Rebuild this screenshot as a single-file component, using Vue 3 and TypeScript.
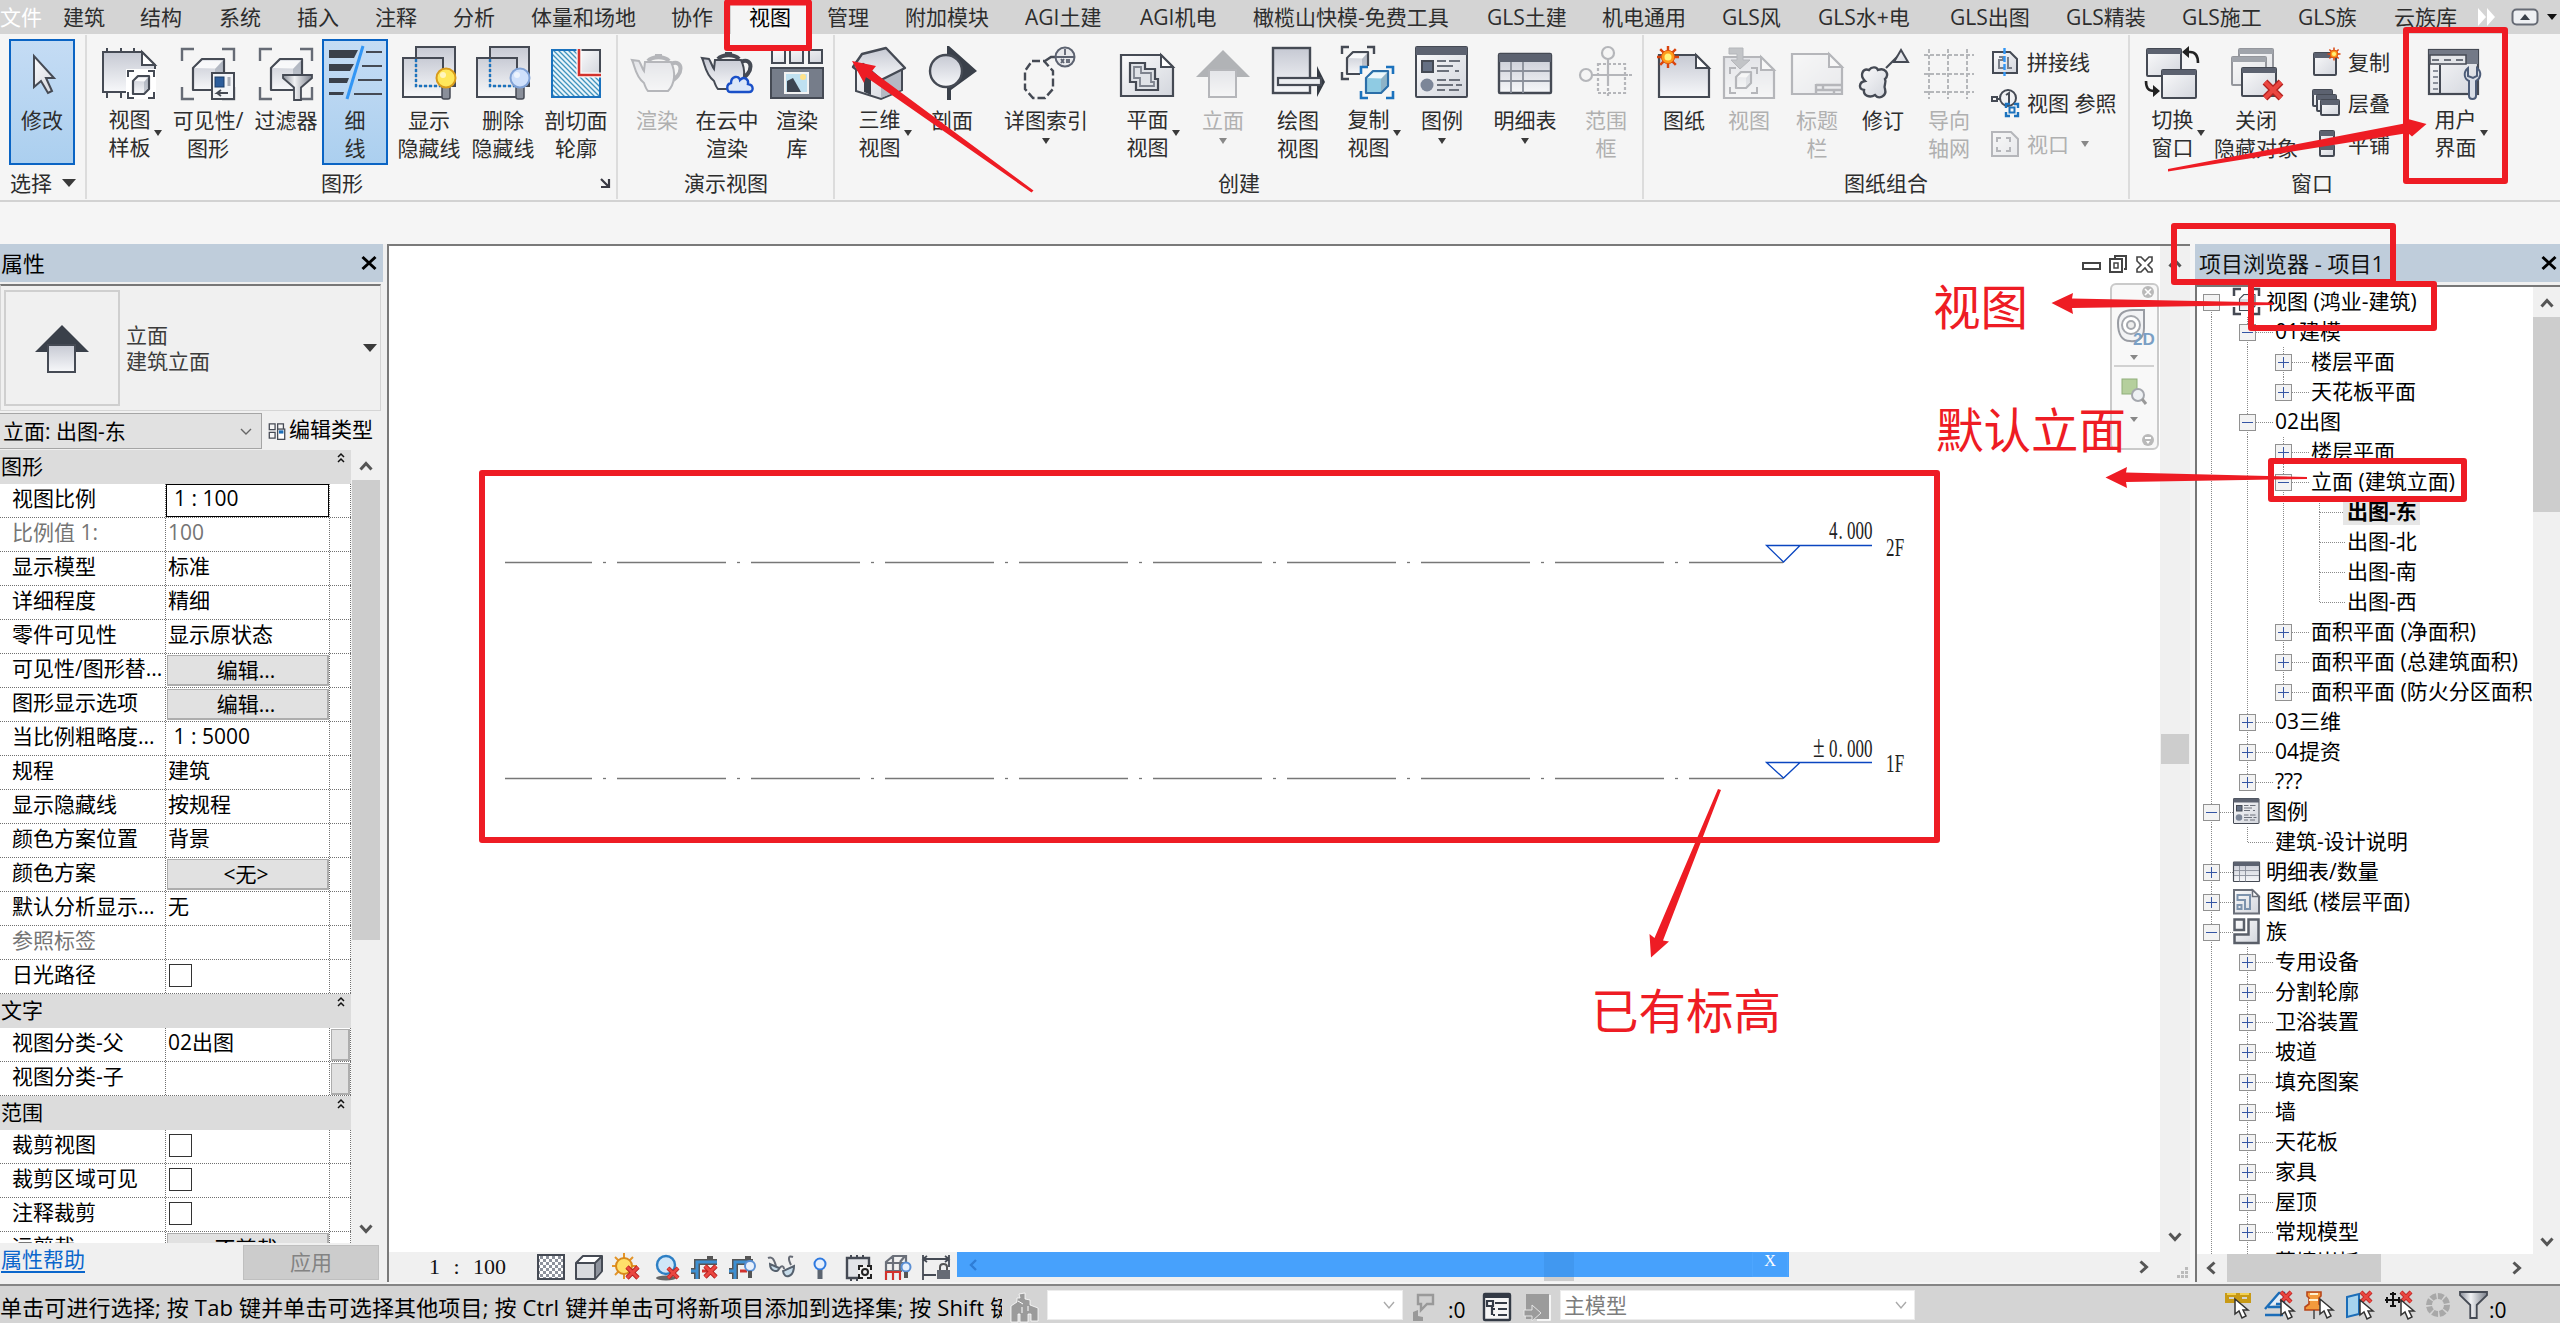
<script setup lang="ts">
type Arrow = 'side' | 'below' | ''
interface Tool { icon: string; lines: string[]; c: number; arrow?: Arrow; on?: boolean; off?: boolean }
interface SmallTool { icon: string; text: string; off?: boolean; arrow?: boolean }
interface Group { from: number; to: number; label: string; labelAt: number; tools: Tool[]; small?: SmallTool[]; smallAt?: number; tail?: Tool[]; launcher?: boolean; menu?: boolean }

const TOOL_W = 66

const tabs: [string, number][] = [
  ['文件', 0], ['建筑', 63], ['结构', 140], ['系统', 219], ['插入', 297], ['注释', 375], ['分析', 453],
  ['体量和场地', 531], ['协作', 671], ['视图', 749], ['管理', 827], ['附加模块', 905], ['AGI土建', 1025],
  ['AGI机电', 1140], ['橄榄山快模-免费工具', 1253], ['GLS土建', 1487], ['机电通用', 1602], ['GLS风', 1722],
  ['GLS水+电', 1818], ['GLS出图', 1950], ['GLS精装', 2066], ['GLS施工', 2182], ['GLS族', 2298], ['云族库', 2394],
]
const tabWidth = (i: number) => (i + 1 < tabs.length ? tabs[i + 1][1] : 2478) - tabs[i][1]

const groups: Group[] = [
  { from: 0, to: 87, label: '选择', labelAt: 31, menu: true, tools: [{ icon: 'cursor', lines: ['修改'], c: 42, on: true }] },
  {
    from: 87, to: 618, label: '图形', labelAt: 342, launcher: true,
    tools: [
      { icon: 'template', lines: ['视图', '样板'], c: 129, arrow: 'side' },
      { icon: 'visibility', lines: ['可见性/', '图形'], c: 208 },
      { icon: 'filter', lines: ['过滤器'], c: 286 },
      { icon: 'thin', lines: ['细', '线'], c: 355, on: true },
      { icon: 'showHidden', lines: ['显示', '隐藏线'], c: 429 },
      { icon: 'removeHidden', lines: ['删除', '隐藏线'], c: 503 },
      { icon: 'cutProfile', lines: ['剖切面', '轮廓'], c: 576 },
    ],
  },
  {
    from: 618, to: 835, label: '演示视图', labelAt: 726,
    tools: [
      { icon: 'teapot', lines: ['渲染'], c: 657, off: true },
      { icon: 'teapotCloud', lines: ['在云中', '渲染'], c: 727 },
      { icon: 'gallery', lines: ['渲染', '库'], c: 797 },
    ],
  },
  {
    from: 835, to: 1644, label: '创建', labelAt: 1239,
    tools: [
      { icon: 'house3d', lines: ['三维', '视图'], c: 879, arrow: 'side' },
      { icon: 'section', lines: ['剖面'], c: 952 },
      { icon: 'callout', lines: ['详图索引'], c: 1046, arrow: 'below' },
      { icon: 'plan', lines: ['平面', '视图'], c: 1147, arrow: 'side' },
      { icon: 'elevation', lines: ['立面'], c: 1223, arrow: 'below', off: true },
      { icon: 'drafting', lines: ['绘图', '视图'], c: 1298 },
      { icon: 'duplicate', lines: ['复制', '视图'], c: 1368, arrow: 'side' },
      { icon: 'legend', lines: ['图例'], c: 1442, arrow: 'below' },
      { icon: 'schedule', lines: ['明细表'], c: 1525, arrow: 'below' },
      { icon: 'scopeBox', lines: ['范围', '框'], c: 1606, off: true },
    ],
  },
  {
    from: 1644, to: 2130, label: '图纸组合', labelAt: 1886,
    tools: [
      { icon: 'sheet', lines: ['图纸'], c: 1684 },
      { icon: 'placeView', lines: ['视图'], c: 1749, off: true },
      { icon: 'titleBlock', lines: ['标题', '栏'], c: 1817, off: true },
      { icon: 'revision', lines: ['修订'], c: 1883 },
      { icon: 'guideGrid', lines: ['导向', '轴网'], c: 1949, off: true },
    ],
    smallAt: 1991,
    small: [
      { icon: 'matchLine', text: '拼接线' },
      { icon: 'viewRef', text: '视图 参照' },
      { icon: 'viewport', text: '视口', off: true, arrow: true },
    ],
  },
  {
    from: 2130, to: 2560, label: '窗口', labelAt: 2312,
    tools: [
      { icon: 'switchWin', lines: ['切换', '窗口'], c: 2172, arrow: 'side' },
      { icon: 'closeHidden', lines: ['关闭', '隐藏对象'], c: 2256 },
    ],
    smallAt: 2312,
    small: [
      { icon: 'newWin', text: '复制' },
      { icon: 'cascade', text: '层叠' },
      { icon: 'tile', text: '平铺' },
    ],
    tail: [{ icon: 'userUi', lines: ['用户', '界面'], c: 2455, arrow: 'side' }],
  },
]
const toolGap = (g: Group, i: number) => {
  const left = g.tools[i].c - TOOL_W / 2
  return i === 0 ? left - g.from : left - (g.tools[i - 1].c + TOOL_W / 2)
}
const smallGap = (g: Group) => (g.smallAt ?? 0) - (g.tools[g.tools.length - 1].c + TOOL_W / 2)

const D = '#454a54'
const cube = (x: number, y: number, w: number, h: number, d: number, c = D, f = 'url(#gl)') =>
  `<path d="M${x} ${y + d}l${d}-${d}h${w}v${h}l-${d} ${d}h-${w}z" fill="${f}" stroke="${c}" stroke-width="2.2" stroke-linejoin="round"/><path d="M${x + 1.5} ${y + d}l${d - 1}-${d - 1.5}h${w - 1}l-${d - 1} ${d - 1}z" fill="#fff" fill-opacity=".85"/><path d="M${x + w} ${y + d + 1}v${h - 2}l${d - 1}-${d}v-${h - 2}z" fill="#8f96a3" fill-opacity=".45"/>`
const corners = (x: number, y: number, w: number, h: number, k: number, c = D, s = 2) =>
  `<path d="M${x} ${y + k}v-${k}h${k}M${x + w - k} ${y}h${k}v${k}M${x + w} ${y + h - k}v${k}h-${k}M${x + k} ${y + h}h-${k}v-${k}" fill="none" stroke="${c}" stroke-width="${s}"/>`
const win = (x: number, y: number, w: number, h: number) =>
  `<rect x="${x}" y="${y}" width="${w}" height="${h}" rx="1" fill="url(#gf)" stroke="${D}" stroke-width="2"/><rect x="${x}" y="${y}" width="${w}" height="5" fill="#5c6270"/>`
const bulb = (x: number, y: number, f: string, s: string) =>
  `<rect x="${x - 4}" y="${y + 8}" width="8" height="13" rx="2" fill="#8a8f9a" stroke="#454a54" stroke-width="1.5"/><circle cx="${x}" cy="${y}" r="9.5" fill="${f}" stroke="${s}" stroke-width="2"/><circle cx="${x - 3}" cy="${y - 3}" r="3" fill="#fff" opacity=".6"/>`
const redX = (x: number, y: number, s: number) =>
  `<path d="M${x} ${y}l${s} ${s}M${x + s} ${y}l-${s} ${s}" stroke="#b3201f" stroke-width="${s * 0.42}"/><path d="M${x} ${y}l${s} ${s}M${x + s} ${y}l-${s} ${s}" stroke="#ea4640" stroke-width="${s * 0.26}"/>`
const pot = (x: number, y: number) =>
  `<g transform="translate(${x} ${y})"><path d="M40 12c12-6 14 12-2 18" fill="none" stroke="${D}" stroke-width="4"/><path d="M14 10h26c5 10 4 22-3 29h-20c-2-2-3-5-4-8C4 24 4 14 1 8l7 1c2 3 3 7 5 10z" fill="url(#gl)" stroke="${D}" stroke-width="2"/><path d="M17 9c4-5 17-5 21 0M24 4h7" fill="none" stroke="${D}" stroke-width="4"/></g>`
const arrowCursor = (x: number, y: number) =>
  `<path transform="translate(${x} ${y})" d="M0 0v15l4-3 3 7 4-2-3-6h5z" fill="#fff" stroke="#333" stroke-width="1.5"/>`
const star = (x: number, y: number, r: number) => {
  let p = ''
  for (let i = 0; i < 8; i++) {
    const a = (i * Math.PI) / 4
    p += `M${x} ${y}L${(x + r * Math.cos(a)).toFixed(1)} ${(y + r * Math.sin(a)).toFixed(1)}`
  }
  return `<path d="${p}" stroke="#d9430d" stroke-width="${r / 4.5}"/><circle cx="${x}" cy="${y}" r="${r * 0.6}" fill="#ff9a1c" stroke="#e0560f" stroke-width="1"/><circle cx="${x}" cy="${y}" r="${r * 0.32}" fill="#fff27a"/>`
}
const hiddenBoxes = `<rect x="14" y="1" width="39" height="39" fill="url(#gl)" stroke="${D}" stroke-width="2"/><rect x="1" y="12" width="40" height="39" fill="url(#gl)" fill-opacity=".85" stroke="${D}" stroke-width="2"/><path d="M14 13v27h27" fill="none" stroke="#1b72bd" stroke-width="2.4" stroke-dasharray="3 2"/>`
const legendIcon = `<rect x="1" y="1" width="51" height="50" rx="1" fill="url(#gf)" stroke="${D}" stroke-width="2"/><rect x="1" y="1" width="51" height="8" fill="#5c6270"/><rect x="7" y="15" width="11" height="11" fill="#657084" stroke="${D}" stroke-width="2"/><circle cx="12" cy="39" r="6.5" fill="#7c8698"/><path d="M22 15h9M34 15h11M22 20h16M22 25h12M40 25h4M22 34h9M34 34h11M22 39h16M41 39h6M22 44h8M34 44h10" stroke="#6c717b" stroke-width="2"/>`
const scheduleIcon = `<rect x="1" y="8" width="52" height="39" rx="1" fill="url(#gl)" stroke="${D}" stroke-width="2.4"/><rect x="1" y="8" width="52" height="8" fill="#5c6270"/><path d="M13 16v31M25 16v31M2 25h50M2 35h50" stroke="#8a8f9a" stroke-width="1.8"/>`
const sheetIcon = `<path d="M2 9h37l13 13v29h-50z" fill="url(#gl)" stroke="${D}" stroke-width="2.2"/><path d="M39 9v13h13z" fill="#fff" stroke="${D}" stroke-width="2"/>`
const revCloud = (x: number, y: number) =>
  `<path transform="translate(${x} ${y})" d="M6 14C0 8 4 1 10 3C13-1 18 0 19 3C26 0 31 7 26 12C28 16 24 19 26 22C28 29 20 33 16 28C11 31 4 29 5 23C-1 22 0 15 6 14z" fill="url(#gf)" stroke="${D}" stroke-width="2.4"/>`
const funnel = (x: number, y: number, w: number, h: number) =>
  `<path d="M${x} ${y}h${w}v${h * 0.12}l-${w * 0.38} ${h * 0.38}v${h * 0.5}h-${w * 0.24}v-${h * 0.5}l-${w * 0.38}-${h * 0.38}z" fill="url(#gm)" stroke="${D}" stroke-width="1.8"/>`

const icons: Record<string, string> = {
  cursor: `<path d="M19 10v31l7-6 7 12 4-2-6-13h8z" fill="url(#gf)" stroke="${D}" stroke-width="2"/>`,
  template: `<path d="M5 2v6M19 2v6M32 2v6M5 44v8M19 44v8" stroke="${D}" stroke-width="2"/><path d="M1 6h39l13 13v27h-52z" fill="url(#gl)" stroke="${D}" stroke-width="2"/><path d="M40 6v13h13z" fill="#fff" stroke="${D}" stroke-width="2"/><rect x="24" y="23" width="30" height="30" fill="#fff"/>${corners(26, 25, 26, 27, 6)}${cube(31, 30, 11, 13, 5)}`,
  visibility: `${corners(1, 3, 52, 50, 12, '#666b75', 2.4)}${cube(12, 13, 22, 22, 9)}<rect x="31" y="27" width="22" height="26" fill="#f2f4f7" stroke="${D}" stroke-width="2"/><rect x="34" y="31" width="9" height="10" fill="#2c5d9b" stroke="#1b3d69"/><path d="M48 31v9" stroke="#a9adb6" stroke-width="3"/><path d="M47 47h-11l4-3m-4 3l4 3" fill="none" stroke="${D}" stroke-width="1.8"/>`,
  filter: `${corners(1, 3, 52, 50, 12, '#666b75', 2.4)}${cube(12, 13, 22, 22, 9)}${funnel(24, 29, 29, 25)}`,
  thin: `<path d="M1 4h29l-4 8h-25zM1 18h25l-4 7h-21zM1 32h20l-2 5h-18zM1 46h15l-1 3h-14z" fill="#3a404a"/><path d="M38 6h16M34 20h20M30 34h24M26 48h28" stroke="${D}" stroke-width="2"/><path d="M35 0L19 53" stroke="#3296f5" stroke-width="3"/>`,
  showHidden: hiddenBoxes + bulb(44, 32, '#ffe75a', '#d89b1b'),
  removeHidden: hiddenBoxes + bulb(44, 32, '#cfe0fb', '#7fa1d6'),
  cutProfile: `<rect x="3" y="4" width="48" height="47" fill="url(#ht)" stroke="#1b72bd" stroke-width="2"/><path d="M30 4h21v24h-21z" fill="url(#gf)" stroke="${D}" stroke-width="2"/><path d="M30 3v26h22" fill="none" stroke="#fff" stroke-width="5"/><path d="M30 3v26h22" fill="none" stroke="#d2322d" stroke-width="2.6"/>`,
  teapot: pot(1, 6),
  teapotCloud: `${pot(1, 4)}<path d="M31 46c-5 0-5-8 0-9 0-7 8-8 9-3 4-4 9-1 8 4 6 1 6 8 1 8z" fill="#dce7f8" stroke="#1a50c8" stroke-width="2.4"/>`,
  gallery: `<path d="M2 4h13v13h-13zM20 4h13v13h-13zM39 4h13v13h-13z" fill="url(#gf)" stroke="${D}" stroke-width="2"/><rect x="1" y="22" width="52" height="30" fill="#767d8a" stroke="${D}" stroke-width="2"/><rect x="15" y="27" width="23" height="20" fill="#bfe0f0" stroke="#f2f2f2" stroke-width="2"/><path d="M17 46v-11l6-3 8 14z" fill="#3c4450"/><circle cx="33" cy="31" r="3" fill="#ffe28a"/>`,
  house3d: `<path d="M4 24v21l25 8 21-9v-21l-22-10z" fill="url(#gf)" stroke="${D}" stroke-width="2"/><path d="M29 33v19l20-8v-21z" fill="#b5bac4"/><path d="M1 21L10 8 34 2 53 22 29 34 11 18 5 24z" fill="url(#gl)" stroke="${D}" stroke-width="2.4" stroke-linejoin="round"/><path d="M12 30l7 3v16l-7-3z" fill="#3a404a"/>`,
  section: `<path d="M24 0L52 25 26 44v10h-4v-54z" fill="#3a404a"/><circle cx="21" cy="25" r="16" fill="url(#gl)" stroke="${D}" stroke-width="2.4"/>`,
  callout: `<path d="M13 15h12l9 10v18l-8 9h-12l-8-9v-18z" fill="none" stroke="${D}" stroke-width="2.4" stroke-dasharray="8 3"/><path d="M26 15l6-4h6" fill="none" stroke="${D}" stroke-width="2.4"/><circle cx="46" cy="11" r="9.500" fill="#e8e9ec" stroke="#5c6270" stroke-width="2"/><path d="M36 11h20M46 3v6M42 13l3 4M45 13l-3 4M48 13v4M50 13v4" stroke="#5c6270" stroke-width="1.8"/>`,
  plan: `<path d="M1 9h40l12 12v29h-52z" fill="url(#gf)" stroke="${D}" stroke-width="2.2"/><path d="M41 9v12h12z" fill="#fff" stroke="${D}" stroke-width="2"/><path d="M10 17h15v6h10v10h3v11h-22v-8h-6z" fill="#dfe2e7" stroke="${D}" stroke-width="2.2"/><path d="M14 21h7v6h10v9h3v4h-14v-8h-6z" fill="none" stroke="#7e838e" stroke-width="1.8"/>`,
  elevation: `<path d="M27 4L54 31h-54z" fill="#3a404a"/><rect x="13" y="24" width="27" height="27" fill="url(#gl)" stroke="${D}" stroke-width="2"/>`,
  drafting: `<rect x="2" y="2" width="37" height="45" fill="url(#gl)" stroke="${D}" stroke-width="2.4"/><path d="M46 20l8 16-8 15z" fill="#343a43"/><rect x="7" y="32" width="43" height="7" fill="#eceef1" stroke="${D}" stroke-width="2.2"/>`,
  duplicate: `${corners(1, 1, 32, 32, 7, D, 2.4)}${cube(6, 6, 15, 16, 6)}<rect x="19" y="20" width="34" height="32" fill="#f5f5f5"/>${corners(20, 21, 32, 31, 7, '#1b72bd', 2.6)}${cube(25, 25, 15, 15, 7, '#2b6ea8', '#8fcbe3')}`,
  legend: legendIcon,
  schedule: scheduleIcon,
  scopeBox: `<g fill="none" stroke="${D}" stroke-width="2.2"><circle cx="29" cy="7" r="6"/><circle cx="7" cy="29" r="6"/><path d="M19 18h27v29h-27z" stroke-dasharray="3 2"/><path d="M29 13v27M14 29h35"/><path d="M29 42v10M50 29h4" stroke-dasharray="3 2"/></g>`,
  sheet: sheetIcon + star(11, 11, 11),
  placeView: `<path d="M2 11h37l13 13v28h-50z" fill="url(#gl)" stroke="${D}" stroke-width="2.2"/><path d="M39 11v13h13z" fill="#fff" stroke="${D}" stroke-width="2"/>${corners(8, 22, 27, 25, 6)}${cube(14, 26, 10, 11, 5)}<path d="M7 2h14v12h7l-10 9-9-9h6v-6h-8z" fill="#6a6f79" stroke="${D}"/>`,
  titleBlock: `<path d="M2 8h37l13 13v27h-50z" fill="url(#gf)" stroke="${D}" stroke-width="2.2"/><path d="M39 8v13h13z" fill="#fff" stroke="${D}" stroke-width="2"/><path d="M26 39h26M26 44h26M33 39v5M44 44v5M26 38v11" stroke="${D}" stroke-width="2.4"/>`,
  revision: `${revCloud(3, 21)}<path d="M30 22l12-12" stroke="${D}" stroke-width="2.2"/><path d="M38 16l7-12 7 12z" fill="url(#gf)" stroke="${D}" stroke-width="2"/>`,
  guideGrid: `<path d="M7 3v50M26 3v50M45 3v50M2 9h50M2 28h50M2 46h50" fill="none" stroke="${D}" stroke-width="2" stroke-dasharray="4 2"/>`,
  matchLine: `<path d="M2 4h17l7 7v14h-24z" fill="url(#gf)" stroke="${D}" stroke-width="2"/><path d="M8 9h4v3h-4v8h6M17 9v11h4" fill="none" stroke="#7a7f89" stroke-width="2"/><path d="M13.500 0v28" stroke="#3296f5" stroke-width="2.4" stroke-dasharray="6 2"/>`,
  viewRef: `<path d="M1 8h5v4h-5zM6 10h4" fill="none" stroke="${D}" stroke-width="2"/><circle cx="17" cy="9" r="8" fill="#f0f1f3" stroke="${D}" stroke-width="2"/><path d="M15 6l3-2v10" fill="none" stroke="${D}" stroke-width="2"/>${corners(15, 15, 12, 12, 4, '#1b72bd', 2.4)}<rect x="18.500" y="18.500" width="5" height="5" fill="none" stroke="#1b72bd" stroke-width="2"/>`,
  viewport: `<path d="M1 2h19l7 7v17h-26z" fill="url(#gf)" stroke="${D}" stroke-width="2"/>${corners(6, 8, 13, 13, 4)}`,
  switchWin: `${win(2, 3, 34, 27)}${win(17, 24, 34, 28)}<path d="M42 6h3c6 0 8 4 8 11" fill="none" stroke="#222" stroke-width="2.6"/><path d="M37 6l7-6v12zM15 45l-7-6v12z" fill="#222"/><path d="M1 35c0 7 2 10 8 10" fill="none" stroke="#222" stroke-width="2.6"/>`,
  closeHidden: `<g opacity=".55">${win(10, 3, 34, 28)}${win(3, 11, 34, 28)}</g>${win(13, 22, 34, 28)}${redX(36, 36, 16)}`,
  newWin: `${win(2, 5, 22, 22)}${star(22, 6, 6.5)}`,
  cascade: `${win(1, 1, 19, 16)}${win(5, 6, 19, 16)}${win(9, 11, 18, 15)}`,
  tile: `${win(8, 1, 14, 11)}${win(8, 15, 14, 11)}`,
  userUi: `<rect x="1" y="4" width="49" height="44" fill="url(#gf)" stroke="${D}" stroke-width="2.2"/><path d="M1 4h49v14h-49z" fill="#737987"/><path d="M2 9h36v9h-36z" fill="#e4e6ea" stroke="${D}" stroke-width="1.500"/><path d="M4 14h7M16 14h7M28 14h7" stroke="#6c717b" stroke-width="2.2"/><path d="M12 19v29" stroke="${D}" stroke-width="2"/><path d="M5 25h5M5 31h5M5 37h5M5 43h5" stroke="#8a8f9a" stroke-width="2.2"/><path d="M40 22c-5 4-4 11 1 13v15c0 4 7 4 7 0v-15c5-3 6-9 1-13v8l-4 2-5-2z" fill="#d8dde6" stroke="#4d5c78" stroke-width="2"/>`,
  // project browser
  views: `${corners(2, 2, 50, 50, 14, D, 5)}${cube(13, 13, 22, 23, 9)}`,
  families: `<path d="M3 3h19v21h-19zM31 3h20v47h-48v-17h28z" fill="url(#gf)" stroke="#5a5f69" stroke-width="5"/>`,
  sheets: `<path d="M2 4h37l13 13v34h-50z" fill="url(#gf)" stroke="#6a6f79" stroke-width="4"/><path d="M39 4v13h13z" fill="#fff" stroke="#6a6f79" stroke-width="3"/><path d="M9 14h25v28h-10v-18h-15zM9 34h8v8h-8z" fill="none" stroke="#7d93ad" stroke-width="4"/>`,
  // view control bar
  detail: `<rect x="1" y="2" width="26" height="24" fill="url(#ck)" stroke="${D}" stroke-width="2"/>`,
  style: `<path d="M1 10l7-7h19v15l-7 8h-19z" fill="#fff" stroke="${D}" stroke-width="2" stroke-linejoin="round"/><path d="M2 11h18v14h-18z" fill="#d8dade"/><path d="M20 11l6-7v14l-6 7z" fill="#8d929c"/><path d="M1 10h19v16M20 10l7-7" fill="none" stroke="${D}" stroke-width="1.800"/>`,
  sunOff: `<path d="M12 0v26M0 13h25M3 4l18 18M21 4L3 22" stroke="#e3952a" stroke-width="2"/><circle cx="12" cy="13" r="8" fill="#ffe06a" stroke="#d98a1c" stroke-width="2"/>${redX(15, 14, 11)}`,
  shadowOff: `<ellipse cx="12" cy="25" rx="10" ry="2.500" fill="#666"/><circle cx="12" cy="12" r="9" fill="#cfe6f8" stroke="#2d7fc4" stroke-width="2.400"/>${redX(14, 15, 10)}`,
  cropOff: `<path d="M7 26V9h20M20 9v-6M1 18h6" fill="none" stroke="#555" stroke-width="6"/><path d="M7 26V9h20M1 18h6" fill="none" stroke="#3d8fd1" stroke-width="3"/><path d="M12 18h8" stroke="#d2322d" stroke-width="3"/>${redX(15, 13, 11)}`,
  cropShow: `<path d="M7 26V9h18M20 9v-6M1 18h6" fill="none" stroke="#555" stroke-width="6"/><path d="M7 26V9h18M1 18h6" fill="none" stroke="#3d8fd1" stroke-width="3"/><path d="M12 18h7" stroke="#d2322d" stroke-width="3"/><circle cx="22" cy="13" r="5" fill="#e7f0fc" stroke="#5a8fd4" stroke-width="2"/><path d="M22 18v7" stroke="#555" stroke-width="4"/>`,
  glasses: `<path d="M1 5c4-2 6 1 8 8M12 16c3-5 5-2 5 0M26 4c-5-2-5 2-2 8" fill="none" stroke="#666b75" stroke-width="2"/><path d="M3 11c0 8 9 9 9 4zM16 18c1 9 11 6 11-5z" fill="#c7dcea" stroke="#56616e" stroke-width="2"/>`,
  reveal: `<circle cx="14" cy="11" r="5.500" fill="#e7f0fc" stroke="#2f7ae0" stroke-width="2"/><path d="M14 17v9" stroke="#5b6470" stroke-width="5"/>`,
  tempProps: `<path d="M2 5h22v20h-22z" fill="#e2e4e8" stroke="${D}" stroke-width="2.400"/><path d="M6 2v4M12 2v4M18 2v4M6 24v4M12 24v4" stroke="${D}" stroke-width="2"/><rect x="13" y="12" width="15" height="15" fill="#efefef"/>${corners(14, 13, 12, 12, 4, '#222')}<circle cx="20" cy="19" r="3" fill="none" stroke="#222" stroke-width="2"/>`,
  analytical: `<path d="M3 27V9l7-6h13v9M10 3v24M3 10h18M3 18h16M17 10v16M22 3l-5 6" fill="none" stroke="#6a6f79" stroke-width="2.200"/><path d="M3 27v-8h14v8M10 20v7" fill="none" stroke="#d2322d" stroke-width="2"/><circle cx="23" cy="14" r="4.500" fill="#e7f0fc" stroke="#5a8fd4" stroke-width="2"/><path d="M23 19v6" stroke="#555" stroke-width="4"/>`,
  constraints: `<path d="M1 2v25M27 2v12M1 6h26M5 3l-4 3 4 3M23 3l4 3-4 3M1 22h13" fill="none" stroke="${D}" stroke-width="1.800"/><path d="M18 17v-3c0-4 7-4 7 0v3" fill="none" stroke="#555" stroke-width="2"/><rect x="15" y="17" width="13" height="9" fill="#666b75"/>`,
  // status bar
  worksets: `<path d="M9 1l6-1v6l5 1v5l8 3v13h-7v-7h-3v8h-8v-8h-2v8h-7v-16l6-4v-4h3z" fill="#9b9b9b" stroke="#fff" stroke-width=".8"/><path d="M12 14v6M18 13v5M8 8l5 3" stroke="#fff" stroke-width="1"/>`,
  editable: `<path d="M8 2h15v9h-6l-6 6v-6h-3z" fill="#cfcfcf" stroke="#999" stroke-width="2.400"/><path d="M3 28v-9l5-2v6l5 1v4z" fill="#999"/>`,
  options: `<rect x="1" y="1" width="26" height="26" rx="1" fill="#f5f5f5" stroke="#333a45" stroke-width="2.400"/><path d="M1 3h26" stroke="#333a45" stroke-width="4"/><path d="M4 8h6v5h-6zM12 10h12M10 16h2M15 16h9M10 22h2M15 22h9M9 13v9" fill="none" stroke="#333a45" stroke-width="2.200"/>`,
  activeOpt: `<rect x="3" y="1" width="23" height="25" fill="#9b9b9b"/><path d="M27 2v25h-13" fill="none" stroke="#fff" stroke-width="1.500"/><path d="M1 17h8v-5l9 8-9 8v-5h-8z" fill="#9b9b9b" stroke="#e6e6e6"/>`,
  selLinks: `<path d="M3 4h9v6h-9zM16 4h9v6h-9zM10 7h8" fill="none" stroke="#c89a16" stroke-width="4"/><path d="M3 3h9M16 3h9" stroke="#ffe36a" stroke-width="1.500"/>${arrowCursor(11, 8)}`,
  selUnder: `<path d="M1 18L15 2h5v11h-8M1 24h18M4 16h14" fill="#e4eef8" stroke="#1b6db8" stroke-width="2.400"/>${redX(17, 1, 10)}${arrowCursor(17, 9)}`,
  selPinned: `<path d="M3 1h14v4l-2 2v6l4 3v3h-18v-3l4-3v-6l-2-2z" fill="#f39a3d" stroke="#b8461a" stroke-width="1.600"/><path d="M6 3h8M5 9h9" stroke="#fff0d0" stroke-width="2"/><path d="M10 19v9" stroke="#444" stroke-width="1.500"/>${arrowCursor(16, 8)}`,
  selFace: `<path d="M2 6l12-3v20l-12 3z" fill="#a6d3ee" stroke="#1b6db8" stroke-width="2"/>${redX(16, 1, 10)}${arrowCursor(15, 9)}`,
  selDrag: `<path d="M9 1v15M1 9h15M6 3h6M6 15h6M3 6v6M15 6v6" stroke="#111" stroke-width="2"/>${redX(17, 1, 10)}${arrowCursor(17, 9)}`,
  gear: `<circle cx="14" cy="14" r="9" fill="none" stroke="#a8a8a8" stroke-width="6" stroke-dasharray="5.500 1.500"/>`,
  filterSel: funnel(1, 1, 27, 26),
  editType: `<path d="M2 3h9v9h-9zM15 3h9v9h-9zM2 16h9v9h-9z" fill="#f5f5f5" stroke="${D}" stroke-width="2"/><rect x="15" y="11" width="11" height="16" fill="#fff" stroke="${D}" stroke-width="2"/><rect x="17" y="13" width="7" height="5" fill="#1b6db8"/>`,
}

type Prop = { k: 'head' | 'text' | 'btn' | 'check' | 'input' | 'more'; n: string; v?: string; dim?: boolean }
const props: Prop[] = [
  { k: 'head', n: '图形' },
  { k: 'input', n: '视图比例', v: '1 : 100' },
  { k: 'text', n: '比例值 1:', v: '100', dim: true },
  { k: 'text', n: '显示模型', v: '标准' },
  { k: 'text', n: '详细程度', v: '精细' },
  { k: 'text', n: '零件可见性', v: '显示原状态' },
  { k: 'btn', n: '可见性/图形替...', v: '编辑...' },
  { k: 'btn', n: '图形显示选项', v: '编辑...' },
  { k: 'text', n: '当比例粗略度...', v: '\u00a01 : 5000' },
  { k: 'text', n: '规程', v: '建筑' },
  { k: 'text', n: '显示隐藏线', v: '按规程' },
  { k: 'text', n: '颜色方案位置', v: '背景' },
  { k: 'btn', n: '颜色方案', v: '<无>' },
  { k: 'text', n: '默认分析显示...', v: '无' },
  { k: 'text', n: '参照标签', v: '', dim: true },
  { k: 'check', n: '日光路径' },
  { k: 'head', n: '文字' },
  { k: 'more', n: '视图分类-父', v: '02出图' },
  { k: 'more', n: '视图分类-子', v: '' },
  { k: 'head', n: '范围' },
  { k: 'check', n: '裁剪视图' },
  { k: 'check', n: '裁剪区域可见' },
  { k: 'check', n: '注释裁剪' },
  { k: 'btn', n: '远剪裁', v: '不剪裁' },
]

interface Node { d: number; t: string; x?: '+' | '-'; icon?: string; bold?: boolean }
const tree: Node[] = [
  { d: 0, t: '视图 (鸿业-建筑)', x: '-', icon: 'views' },
  { d: 1, t: '01建模', x: '-' },
  { d: 2, t: '楼层平面', x: '+' },
  { d: 2, t: '天花板平面', x: '+' },
  { d: 1, t: '02出图', x: '-' },
  { d: 2, t: '楼层平面', x: '+' },
  { d: 2, t: '立面 (建筑立面)', x: '-' },
  { d: 3, t: '出图-东', bold: true },
  { d: 3, t: '出图-北' },
  { d: 3, t: '出图-南' },
  { d: 3, t: '出图-西' },
  { d: 2, t: '面积平面 (净面积)', x: '+' },
  { d: 2, t: '面积平面 (总建筑面积)', x: '+' },
  { d: 2, t: '面积平面 (防火分区面积)', x: '+' },
  { d: 1, t: '03三维', x: '+' },
  { d: 1, t: '04提资', x: '+' },
  { d: 1, t: '???', x: '+' },
  { d: 0, t: '图例', x: '-', icon: 'legend' },
  { d: 1, t: '建筑-设计说明' },
  { d: 0, t: '明细表/数量', x: '+', icon: 'schedule' },
  { d: 0, t: '图纸 (楼层平面)', x: '+', icon: 'sheets' },
  { d: 0, t: '族', x: '-', icon: 'families' },
  ...['专用设备', '分割轮廓', '卫浴装置', '坡道', '填充图案', '墙', '天花板', '家具', '屋顶', '常规模型', '幕墙嵌板'].map(
    (t): Node => ({ d: 1, t, x: '+' }),
  ),
]
const continues = (i: number, d: number) => {
  for (let j = i + 1; j < tree.length; j++) {
    if (tree[j].d < d) return false
    if (tree[j].d === d) return true
  }
  return d === 0 || tree[i].t === '幕墙嵌板'
}
const guides = (i: number) => {
  const n = tree[i]
  let p = ''
  for (let d = 0; d < n.d; d++) if (continues(i, d)) p += `M${d * 36 + 8.5} 0v30`
  const x = n.d * 36 + 8.5
  if (i > 0) p += `M${x} 0v15`
  if (continues(i, n.d)) p += `M${x} 15v15`
  return p + `M${x} 15.500h${n.icon ? 21 : 25}`
}

const viewIcons: [string, number][] = [
  ['detail', 0], ['style', 10], ['sunOff', 9], ['shadowOff', 14], ['cropOff', 8], ['cropShow', 10], ['glasses', 11],
  ['reveal', 11], ['tempProps', 11], ['analytical', 10], ['constraints', 11],
]
const selIcons: [string, number][] = [
  ['selLinks', 0], ['selUnder', 12], ['selPinned', 12], ['selFace', 13], ['selDrag', 11], ['gear', 12], ['filterSel', 7],
]
const dashes = Array.from({ length: 10 }, (_, k) => 1689 - 134 * k)
</script>

<template>
  <div class="app">
    <svg class="defs" width="0" height="0">
      <defs>
        <linearGradient id="gl" x1="0" y1="0" x2="0" y2="1"><stop offset="0" stop-color="#c6c9d3" /><stop offset="1" stop-color="#f7f8fa" /></linearGradient>
        <linearGradient id="gf" x1="0" y1="0" x2="1" y2="1"><stop offset="0" stop-color="#fbfbfc" /><stop offset="1" stop-color="#d3d6dd" /></linearGradient>
        <linearGradient id="gm" x1="0" y1="0" x2="1" y2="0"><stop offset="0" stop-color="#8a8f9a" /><stop offset=".4" stop-color="#f1f2f4" /><stop offset="1" stop-color="#7a7f8a" /></linearGradient>
        <pattern id="ht" width="5" height="5" patternUnits="userSpaceOnUse"><rect width="5" height="5" fill="#e8f4fa" /><path d="M-1 -1L6 6M-1 4l2 2M4 -1l2 2" stroke="#3f93bd" stroke-width="1.300" /></pattern>
        <pattern id="ck" width="6" height="6" patternUnits="userSpaceOnUse"><rect width="6" height="6" fill="#fff" /><path d="M0 0h3v3h-3zM3 3h3v3h-3z" fill="#8d929c" /></pattern>
      </defs>
    </svg>

    <nav class="tabs">
      <div v-for="(t, i) in tabs" :key="t[0]" class="tab" :class="{ file: i === 0, active: t[0] === '视图' }" :style="{ width: tabWidth(i) + 'px' }"><span>{{ t[0] }}</span></div>
      <svg class="more" width="17" height="18"><path d="M0 0l8 9-8 9zM9 0l8 9-8 9z" fill="#fff" /></svg>
      <svg class="mini" width="28" height="18"><rect x="1.500" y="1.500" width="25" height="15" rx="4" fill="#eef0f3" stroke="#666b75" stroke-width="2" /><path d="M9 12l5-6 5 6z" fill="#3a404a" /></svg>
      <svg class="caret" width="10" height="6"><path d="M0 0h10l-5 6z" fill="#111" /></svg>
    </nav>

    <section class="ribbon">
      <div v-for="g in groups" :key="g.label" class="group" :style="{ width: g.to - g.from + 'px' }">
        <div class="tools">
          <div v-for="(b, i) in g.tools" :key="b.lines.join()" class="tool" :class="[{ on: b.on, off: b.off }, b.arrow]" :style="{ marginLeft: toolGap(g, i) + 'px' }">
            <svg class="big" width="54" height="54" viewBox="0 0 54 54" v-html="icons[b.icon]" />
            <div class="lab"><span class="txt"><span v-for="l in b.lines" :key="l">{{ l }}</span></span><i v-if="b.arrow" class="tri" /></div>
          </div>
          <div v-if="g.small" class="small" :style="{ marginLeft: smallGap(g) + 'px' }">
            <div v-for="s in g.small" :key="s.text" class="srow" :class="{ off: s.off }">
              <svg width="28" height="28" viewBox="0 0 28 28" v-html="icons[s.icon]" /><span>{{ s.text }}</span><i v-if="s.arrow" class="tri" />
            </div>
          </div>
          <div v-for="b in g.tail ?? []" :key="b.icon" class="tool tail side">
            <svg class="big" width="54" height="54" viewBox="0 0 54 54" v-html="icons[b.icon]" />
            <div class="lab"><span class="txt"><span v-for="l in b.lines" :key="l">{{ l }}</span></span><i class="tri" /></div>
          </div>
        </div>
        <div class="glabel">
          <span class="gname" :style="{ width: (g.labelAt - g.from) * 2 + 'px' }">{{ g.label }}</span>
          <i v-if="g.menu" class="tri wide" />
          <svg v-if="g.launcher" class="launch" width="10" height="10"><path d="M1 1l7 7M9 1v8h-8" fill="none" stroke="#3a3a44" stroke-width="2.200" /></svg>
        </div>
      </div>
    </section>

    <main class="work">
      <aside class="props">
        <header class="ptitle"><span>属性</span><svg width="16" height="14"><path d="M1.500 1l13 12M14.500 1l-13 12" stroke="#000" stroke-width="3" /></svg></header>
        <div class="type">
          <div class="thumb"><svg width="54" height="54" viewBox="0 0 54 54" v-html="icons.elevation" /></div>
          <div class="tname"><span>立面</span><span>建筑立面</span></div>
          <i class="tri wide" />
        </div>
        <div class="inst">
          <div class="combo"><span>立面: 出图-东</span><svg width="12" height="7"><path d="M1 1l5 5 5-5" fill="none" stroke="#666" stroke-width="1.400" /></svg></div>
          <svg class="et" width="18" height="18" viewBox="0 0 28 28" v-html="icons.editType" /><span class="ett">编辑类型</span>
        </div>
        <div class="gridwrap">
          <div class="pgrid">
            <template v-for="p in props" :key="p.n">
              <div v-if="p.k === 'head'" class="phead"><span>{{ p.n }}</span><svg width="8" height="10"><path d="M1 4l3-3 3 3M1 9l3-3 3 3" fill="none" stroke="#111" stroke-width="1.500" /></svg></div>
              <div v-else class="prow" :class="{ dim: p.dim }">
                <span class="pn">{{ p.n }}</span>
                <span class="pv">
                  <span v-if="p.k === 'btn'" class="pbtn">{{ p.v }}</span>
                  <span v-else-if="p.k === 'input'" class="pinput">{{ p.v }}</span>
                  <span v-else-if="p.k === 'check'" class="pcheck" />
                  <span v-else class="ptext">{{ p.v }}</span>
                </span>
                <span class="pm"><i v-if="p.k === 'more'" /></span>
              </div>
            </template>
          </div>
          <div class="vs pvs">
            <svg width="14" height="10"><path d="M1.500 8.500l5.500-6 5.500 6" fill="none" stroke="#555" stroke-width="3" /></svg>
            <i class="thumbbar" />
            <svg class="down" width="14" height="10"><path d="M1.500 1.500l5.500 6 5.500-6" fill="none" stroke="#555" stroke-width="3" /></svg>
          </div>
        </div>
        <footer class="pfoot"><span class="help">属性帮助</span><span class="apply">应用</span></footer>
      </aside>

      <section class="view">
        <div class="vmain">
          <svg class="drawing" width="1771" height="1006" viewBox="389 246 1771 1006">
            <g v-for="y in [562.5, 778.5]" :key="y" stroke="#777" stroke-width="1.300">
              <template v-for="x in dashes" :key="x">
                <path :d="`M${Math.max(x, 505)} ${y}H${Math.max(505, Math.min(x + 109, 1783))}`" />
                <path v-if="x > 520" :d="`M${x - 14} ${y}h3`" />
              </template>
            </g>
            <g fill="none" stroke="#0a46c0" stroke-width="1.300">
              <path d="M1872 545.500H1766.500L1783.500 562L1800 545.500" />
              <path d="M1872 762.500H1766.500L1783.500 778L1800 762.500" />
            </g>
            <g class="lvl">
              <text transform="translate(1829 539) scale(.68 1)" x="0 14 26.500 39 51.500">4.000</text>
              <text transform="translate(1886 556) scale(.68 1)" x="0 13">2F</text>
              <text transform="translate(1813 757) scale(.68 1)"><tspan class="pm-sign" x="0">±</tspan><tspan x="23.500 37.500 50 62.500 75">0.000</tspan></text>
              <text transform="translate(1886 772) scale(.68 1)" x="0 13">1F</text>
            </g>
          </svg>
          <div class="winctl">
            <svg width="72" height="20" fill="none" stroke="#444" stroke-width="2"><rect x="2" y="9" width="17" height="6" /><path d="M34 4v-2h11v13h-2" /><rect x="29" y="5" width="12" height="13" /><rect x="33" y="9" width="4" height="5" stroke-width="1.500" /><path d="M56 3h4l4 4 4-4h3v4l-4 4 4 4v3h-4l-3-4-4 4h-4v-3l4-4-4-4z" stroke-width="1.600" /></svg>
          </div>
          <div class="navbar">
            <svg width="48" height="167">
              <circle cx="38" cy="9" r="6" fill="#b9b9b9" /><path d="M35 6l6 6M41 6l-6 6" stroke="#fff" stroke-width="1.600" />
              <path d="M8 40c0-10 6-13 15-13h11v18c0 12-8 14-14 13-8 0-12-7-12-18z" fill="#f2f3f5" stroke="#999ca3" stroke-width="2" /><circle cx="21" cy="42" r="9" fill="#fff" stroke="#a5a8ae" stroke-width="2" /><circle cx="21" cy="42" r="4" fill="#eee" stroke="#a5a8ae" stroke-width="2" />
              <text x="23" y="62" class="two">2D</text>
              <path d="M20 72h8l-4 5zM20 134h8l-4 5z" fill="#888" /><path d="M4 83h40" stroke="#c4c4c4" stroke-width="1.500" />
              <rect x="12" y="96" width="15" height="15" fill="#b5cf9d" stroke="#8fae7a" /><circle cx="28" cy="112" r="6" fill="#eef1f4" stroke="#a5a8ae" stroke-width="2" /><path d="M32 116l4 5" stroke="#999" stroke-width="3" />
              <circle cx="38" cy="157" r="6" fill="#b9b9b9" /><path d="M35 154h6v2h-6zM36 158l2 3 2-3z" fill="#fff" />
            </svg>
          </div>
          <div class="vs cvs">
            <svg width="14" height="10"><path d="M1.500 8.500l5.500-6 5.500 6" fill="none" stroke="#555" stroke-width="3" /></svg>
            <i class="thumbbar" />
            <svg class="down" width="14" height="10"><path d="M1.500 1.500l5.500 6 5.500-6" fill="none" stroke="#555" stroke-width="3" /></svg>
          </div>
        </div>
        <div class="vbar">
          <span class="scale"><b>1</b><b></b><b>:</b><b></b><b>1</b><b>0</b><b>0</b></span>
          <svg v-for="v in viewIcons" :key="v[0]" width="28" height="28" viewBox="0 0 28 28" :style="{ marginLeft: v[1] + 'px' }" v-html="icons[v[0]]" />
          <span class="hs"><i class="hthumb" /><span class="blue"><svg width="8" height="12"><path d="M7 1L2 6l5 5" fill="none" stroke="#2f7dd6" stroke-width="2.400" /></svg><i class="seg" /><span class="bx">X</span></span></span>
          <svg class="hr" width="10" height="14"><path d="M1.500 1.500l6 5.500-6 5.500" fill="none" stroke="#555" stroke-width="3" /></svg>
          <svg class="grip" width="12" height="12"><path d="M8 0h3v3h-3zM4 4h3v3h-3zM8 4h3v3h-3zM0 8h3v3h-3zM4 8h3v3h-3zM8 8h3v3h-3z" fill="#bbb" /></svg>
        </div>
      </section>

      <aside class="browser">
        <header class="btitle"><span>项目浏览器 - 项目1</span><svg width="16" height="14"><path d="M1.500 1l13 12M14.500 1l-13 12" stroke="#000" stroke-width="3" /></svg></header>
        <div class="bbody">
          <div class="tree">
            <div v-for="(n, i) in tree" :key="i" class="node">
              <svg :width="n.d * 36 + (n.icon ? 31 : 36)" height="30" shape-rendering="crispEdges">
                <path :d="guides(i)" fill="none" stroke="#8a8a8a" stroke-dasharray="1 1" />
                <g v-if="n.x" fill="none"><rect :x="n.d * 36 + 0.5" y="7.500" width="16" height="16" fill="#f3f3f3" stroke="#919191" /><path :d="`M${n.d * 36 + 3} 15.500h11` + (n.x === '+' ? `M${n.d * 36 + 8.5} 10v11` : '')" stroke="#3455a4" /></g>
              </svg>
              <svg v-if="n.icon" class="ni" width="27" height="27" viewBox="0 0 54 54" v-html="icons[n.icon]" />
              <span :class="{ bold: n.bold }">{{ n.t }}</span>
            </div>
          </div>
          <div class="vs bvs">
            <svg width="14" height="10"><path d="M1.500 8.500l5.500-6 5.500 6" fill="none" stroke="#555" stroke-width="3" /></svg>
            <i class="thumbbar" />
            <svg class="down" width="14" height="10"><path d="M1.500 1.500l5.500 6 5.500-6" fill="none" stroke="#555" stroke-width="3" /></svg>
          </div>
        </div>
        <div class="bhs">
          <svg width="10" height="14"><path d="M8.500 1.500l-6 5.500 6 5.500" fill="none" stroke="#555" stroke-width="3" /></svg><i />
          <svg class="r" width="10" height="14"><path d="M1.500 1.500l6 5.500-6 5.500" fill="none" stroke="#555" stroke-width="3" /></svg>
        </div>
      </aside>
    </main>

    <footer class="status">
      <span class="msg">单击可进行选择; 按 Tab 键并单击可选择其他项目; 按 Ctrl 键并单击可将新项目添加到选择集; 按 Shift 键并单击可取消选择。</span>
      <svg class="i1" width="28" height="28" viewBox="0 0 28 28" v-html="icons.worksets" />
      <span class="box"><svg width="12" height="8"><path d="M1 1l5 6 5-6" fill="none" stroke="#aaa" stroke-width="1.400" /></svg></span>
      <svg class="i2" width="28" height="28" viewBox="0 0 28 28" v-html="icons.editable" />
      <span class="zero">:0</span>
      <svg class="i3" width="28" height="28" viewBox="0 0 28 28" v-html="icons.options" />
      <svg class="i4" width="28" height="28" viewBox="0 0 28 28" v-html="icons.activeOpt" />
      <span class="box model">主模型<svg width="12" height="8"><path d="M1 1l5 6 5-6" fill="none" stroke="#aaa" stroke-width="1.400" /></svg></span>
      <span class="sel"><svg v-for="s in selIcons" :key="s[0]" width="28" height="28" viewBox="0 0 28 28" :style="{ marginLeft: s[1] + 'px' }" v-html="icons[s[0]]" /><span class="zero">:0</span></span>
    </footer>

    <svg class="marks" width="2560" height="1323">
      <g fill="none" stroke="#ee1c24" stroke-width="6" stroke-linejoin="round">
        <rect x="727" y="2.500" width="82" height="45.500" />
        <rect x="2406" y="30" width="99" height="151" />
        <rect x="2174" y="226" width="219" height="56" />
        <rect x="2251" y="284" width="183" height="44" />
        <rect x="2271" y="461" width="193" height="38" />
        <rect x="482" y="473" width="1455" height="367" />
      </g>
      <g fill="#ee1c24">
        <path d="M852 61L876 66L872 71L1033.500 190.500L1031.500 192.500L866 77L864 83Z" />
        <path d="M2426.500 124L2408 119L2407 123L2168 169L2168 171.500L2408 133L2412 136.500Z" />
        <path d="M2051.500 303L2073 293L2072 298.500L2273 302.500V305L2072 308L2073 314Z" />
        <path d="M2105.500 477.500L2127 467L2126 472.500L2307 477V479L2126 482L2127 488Z" />
        <path d="M1651 957.500L1649.500 934L1654.500 938L1718 789L1721 790L1663 940.500L1669 941.500Z" />
      </g>
      <g class="note">
        <text x="1933" y="325">视图</text>
        <text x="1936" y="448">默认立面</text>
        <text x="1591" y="1029">已有标高</text>
      </g>
    </svg>
  </div>
</template>

<style>
html, body { margin: 0; overflow: hidden; background: #f5f5f5; }
</style>

<style scoped>
.app { position: relative; width: 2560px; height: 1323px; overflow: hidden; display: flex; flex-direction: column; background: #f5f5f5; font: 21px/28px "Open Sans", "Noto Sans CJK SC", sans-serif; color: #2d2d2d; white-space: nowrap; }
.app * { box-sizing: border-box; }
svg { flex: none; overflow: visible; display: block; }
.defs { position: absolute; }

.tabs { height: 34px; background: #d4d4d4; display: flex; align-items: center; flex: none; }
.tab { flex: none; height: 34px; line-height: 34px; }
.file { color: #fff; }
.active { color: #000; background: #f5f5f5; margin-left: -18px; padding-left: 18px; box-sizing: content-box !important; }
.active { width: 60px !important; margin-right: 18px; }
.mini { margin-left: 16px; }
.caret { margin-left: 8px; }

.ribbon { height: 168px; flex: none; display: flex; border-bottom: 2px solid #d2d2d2; }
.group { flex: none; display: flex; flex-direction: column; position: relative; padding-top: 5px; border-right: 2px solid #dcdcdc; border-image: linear-gradient(#f5f5f5 2px, #dcdcdc 2px, #dcdcdc 164px, #f5f5f5 164px) 1; }
.group:last-child { border-right: 0; }
.tools { height: 126px; display: flex; }
.tool { width: 66px; flex: none; height: 126px; padding-top: 7px; display: flex; flex-direction: column; align-items: center; }
.tool.on { background: linear-gradient(#c5dcf4, #abcfef); outline: 2px solid #0a64c4; outline-offset: -2px; }
.lab { margin-top: 6px; display: flex; align-items: center; justify-content: center; }
.txt { display: flex; flex-direction: column; align-items: center; line-height: 28px; }
.side .lab { margin-top: 5px; }
.tri { width: 0; height: 0; flex: none; border: 4.500px solid transparent; border-top: 6px solid #3a3a3a; border-bottom: 0; }
.side .tri { margin: 0 -12px 0 3px; }
.below .lab { flex-direction: column; }
.below .tri { margin-top: 4px; }
.tri.wide { border-width: 8px 7px 0; }
.off span { color: #b0b0b0; }
.off svg { opacity: .36; }
.off .tri { border-top-color: #888; }
.small { width: 110px; display: flex; flex-direction: column; padding-top: 9px; gap: 13px; }
.srow { display: flex; align-items: center; gap: 8px; height: 28px; }
.srow .tri { margin-left: 4px; }
.tail { margin-left: 0; }
.glabel { flex: 1; display: flex; align-items: center; }
.gname { flex: none; text-align: center; }
.glabel .wide { margin-left: 0; }
.launch { margin-left: 3px; }

.work { height: 1082px; padding-top: 42px; display: flex; flex: none; }
.props { width: 387px; flex: none; background: #f0f0f0; display: flex; flex-direction: column; color: #000; height: 1040px; }
.ptitle { height: 38px; width: 383px; background: #bfcddb; display: flex; align-items: center; justify-content: space-between; padding: 0 6px 0 1px; font-size: 22px; }
.type { margin-top: 2px; height: 127px; width: 381px; border: 1px solid #d5d5d5; border-top: 2px solid #777; display: flex; align-items: center; color: #3c3c3c; }
.thumb { width: 116px; height: 116px; margin-left: 3px; border: 2px solid #cfcfcf; display: flex; align-items: center; justify-content: center; }
.tname { margin-left: 6px; display: flex; flex-direction: column; line-height: 26px; flex: 1; }
.type .wide { margin-right: 3px; }
.inst { height: 39px; display: flex; align-items: center; padding-top: 1px; }
.combo { width: 262px; height: 36px; background: #e1e1e1; border: 1px solid #a5a5a5; border-left: 0; display: flex; align-items: center; justify-content: space-between; padding: 0 9px 0 3px; }
.et { margin-left: 6px; }
.ett { margin-left: 3px; margin-top: -4px; }
.gridwrap { display: flex; height: 793px; overflow: hidden; flex: none; }
.pgrid { width: 351px; background: #fff; flex: none; overflow: hidden; }
.phead { height: 34px; background: #dcdcdc; padding: 0 6px 0 1px; display: flex; justify-content: space-between; line-height: 32px; }
.phead svg { margin-top: 3px; }
.prow { height: 34px; display: flex; border-bottom: 1px dotted #707070; line-height: 28px; }
.pn { width: 165px; padding-left: 12px; flex: none; }
.pv { width: 165px; border-left: 1px dotted #707070; border-right: 1px dotted #707070; flex: none; display: flex; }
.pm { width: 21px; border-right: 1px dotted #707070; display: flex; }
.pm i { flex: 1; margin: 1px 0 0 1px; background: #e1e1e1; border: 1px solid #adadad; border-width: 1px 2px 2px 1px; }
.dim { color: #757575; }
.ptext { padding-left: 2px; }
.pinput { flex: 1; border: 1.500px solid #000; padding-left: 7px; line-height: 26px; }
.pbtn { flex: 1; margin: 1px 0 1px 1px; background: #e1e1e1; border: 1px solid #adadad; border-width: 1px 2px 2px 1px; text-align: center; line-height: 28px; padding-right: 3px; }
.pcheck { width: 23px; height: 23px; margin: 4px 0 0 3px; border: 1.500px solid #333; }
.vs { display: flex; flex-direction: column; align-items: center; background: #f0f0f0; }
.vs .thumbbar { background: #cdcdcd; width: 28px; }
.pvs { width: 30px; padding-top: 11px; }
.pvs .thumbbar { margin-top: 9px; height: 460px; }
.pvs .down { margin-top: 284px; }
.pfoot { flex: 1; display: flex; justify-content: space-between; width: 379px; }
.help { color: #0a66cc; text-decoration: underline; padding-left: 1px; line-height: 32px; text-underline-offset: 4px; }
.apply { width: 136px; height: 35px; margin-top: 2px; background: #ccc; border: 1px solid #bfbfbf; color: #838383; text-align: center; line-height: 32px; }

.view { width: 1803px; flex: none; border-left: 2px solid #7a7a7a; border-top: 2px solid #7a7a7a; background: #fff; height: 1038px; display: flex; flex-direction: column; }
.vmain { height: 1006px; position: relative; display: flex; justify-content: space-between; flex: none; }
.winctl { position: absolute; left: 1692px; top: 8px; }
.navbar { position: absolute; left: 1721px; top: 37px; width: 49px; height: 167px; border: 2px solid #cacaca; border-radius: 6px; background: #f8f8f8; }
.navbar svg { margin: -2px; }
.two { font: bold 17px "Liberation Sans", sans-serif; fill: #7a9fc4; }
.cvs { width: 30px; padding-top: 12px; }
.cvs .thumbbar { margin-top: 466px; height: 30px; }
.cvs .down { margin-top: 468px; }
.vbar { flex: 1; background: #f0f0f0; display: flex; align-items: center; padding-left: 40px; }
.scale { display: flex; width: 108px; flex: none; font: 22px/28px "Liberation Serif", serif; color: #111; }
.scale b { width: 11px; text-align: center; font-weight: normal; }
.hs { position: relative; width: 1180px; height: 30px; margin-left: 7px; flex: none; }
.hthumb { position: absolute; left: 587px; top: 0; width: 30px; height: 29px; background: #cdcdcd; }
.blue { position: absolute; left: 0; top: 0; width: 832px; height: 25px; background: #47a1fc; display: flex; align-items: center; padding-left: 12px; }
.seg { width: 30px; height: 25px; margin-left: 567px; background: #4198f0; }
.bx { margin-left: 178px; width: 36px; height: 25px; border: 1px solid #4da6ff; color: #fff; text-align: center; font: 16px/15px "Liberation Serif", serif; }
.hr { margin-left: 2px; }
.grip { margin: 12px 0 0 28px; }

.browser { margin-left: 5px; flex: 1; display: flex; flex-direction: column; color: #000; height: 1040px; background: #f0f0f0; }
.btitle { height: 38px; background: #bfcddb; display: flex; align-items: center; justify-content: space-between; padding: 0 3px 0 4px; font-size: 22px; color: #111; flex: none; }
.bbody { margin-top: 3px; height: 969px; display: flex; border-left: 2px solid #777; border-top: 2px solid #777; flex: none; }
.tree { width: 336px; background: #fff; padding-left: 6px; overflow: hidden; }
.node { height: 30px; display: flex; align-items: center; line-height: 28px; }
.node span { margin-top: -2px; }
.ni { margin: -2px 6px 0 -1px; }
.bold { font-weight: bold; background: #e6e6e6; height: 28px; padding: 0 3px 0 4px; margin-left: -4px; }
.bvs { width: 27px; padding-top: 11px; }
.bvs .thumbbar { margin-top: 9px; height: 195px; }
.bvs .down { margin-top: 725px; }
.bhs { height: 28px; display: flex; align-items: center; border-left: 2px solid #777; padding-left: 9px; }
.bhs i { width: 154px; height: 28px; background: #cdcdcd; margin-left: 11px; }
.bhs .r { margin-left: 131px; }

.status { height: 39px; flex: none; background: #d4d4d4; border-top: 2px solid #858585; display: flex; align-items: center; color: #000; }
.msg { width: 1002px; overflow: hidden; font-size: 22px; letter-spacing: .15px; flex: none; line-height: 36px; margin-top: 5px; }
.i1 { margin: 4px 0 0 8px; }
.box { width: 356px; height: 30px; background: #fff; margin-left: 9px; display: flex; align-items: center; justify-content: flex-end; padding: 0 7px 0 3px; border: 1px solid #ececec; flex: none; }
.model { justify-content: space-between; color: #7d7d7d; margin-left: 9px; width: 355px; }
.i2 { margin: 4px 0 0 7px; }
.zero { width: 22px; margin-top: 10px; margin-left: 10px; font-size: 21px; }
.i3 { margin: 4px 0 0 13px; }
.i4 { margin: 4px 0 0 12px; }
.sel { display: flex; align-items: center; margin-left: 309px; }
.sel .zero { margin-left: 2px; }

.marks { position: absolute; left: 0; top: 0; pointer-events: none; }
.note { font: 47.500px "Noto Sans CJK SC", sans-serif; fill: #ee1c24; }
.lvl { font: 25px "Liberation Serif", serif; fill: #222; }
.pm-sign { font-size: 31px; }
</style>
